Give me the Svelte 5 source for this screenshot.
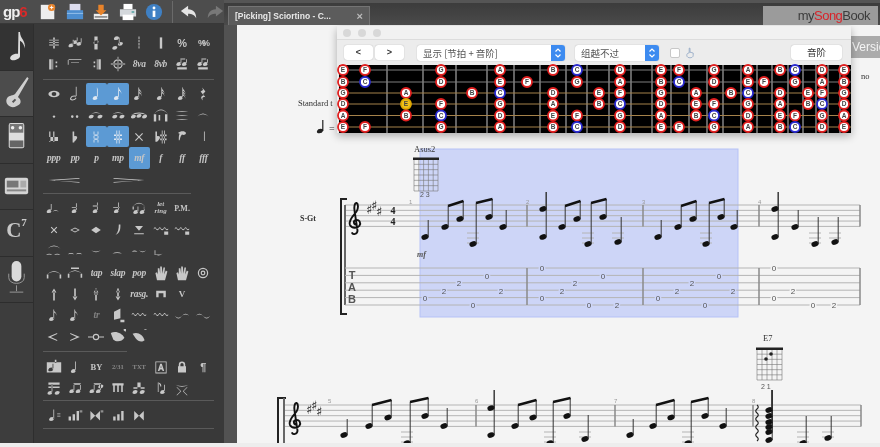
<script>
  const head = (x, y) => `M${x - 3} ${y}a3 2.1 -20 1 1 6 0a3 2.1 -20 1 1 -6 0z`;
  const bar = (x, y, w, h) => `M${x} ${y}h${w}v${h}h-${w}z`;
  const q = (x, y, top) => head(x, y) + bar(x + 2.2, top, 1, y - top);
  const flag = (x, y) => `M${x} ${y}c0 3 4 4 3 8c0-3-2-4-3-4z`;
  const arc = (x, y, w, h) => `M${x} ${y}q${w / 2} ${-h} ${w} 0q${-w / 2} ${-h + 2} ${-w} 0z`;
  const ring = (x, y, r, i) => `M${x - r} ${y}a${r} ${r} 0 1 1 ${2 * r} 0a${r} ${r} 0 1 1 ${-2 * r} 0zM${x - i} ${y}a${i} ${i} 0 1 0 ${2 * i} 0a${i} ${i} 0 1 0 ${-2 * i} 0z`;
  const wave = (x, y, n) => { let s = `M${x} ${y}`; for (let i = 0; i < n; i++) s += 'q1.5 -3 3 0q1.5 2 3 0'; s += 'v1.4'; for (let i = 0; i < n; i++) s += 'q-1.5 2 -3 0q-1.5 -3 -3 0'; return s + 'z'; };
  const T = (t, c = 'sans') => ({ t, c });
  const P = (d, sel = false) => ({ d, sel });
  const E = {};
  const beamed = (a, b) => q(a, 14, 5) + q(b, 14, 5) + bar(a + 2.2, 4, b - a + 1, 2);
  const figs = bar(4, 14, 12, 3) + q(6, 10, 4) + q(13, 10, 4) + bar(8, 3, 6, 1.5);

  const sec1 = [
    [P(bar(9, 3, 2, 14) + bar(4, 6, 12, 1) + bar(4, 9, 12, 1) + bar(4, 12, 12, 1)), P(q(5, 13, 6) + q(10, 9, 3) + q(15, 11, 4)), P(bar(8, 2, 4, 16) + head(10, 9)), P(head(8, 4) + head(13, 11) + head(6, 16) + bar(11, 3, 1, 9)), P(bar(9.4, 2, 1.2, 3) + bar(9.4, 6, 1.2, 3) + bar(9.4, 10, 1.2, 3) + bar(9.4, 14, 1.2, 3)), P(bar(8.5, 3, 3, 14)), T('%', 'bold'), T('%%', 'tight')],
    [P(bar(4, 4, 3, 13) + bar(8, 4, 1, 13) + bar(12, 7, 2, 2) + bar(12, 12, 2, 2)), P(bar(1, 4, 17, 1) + bar(1, 4, 1, 7) + bar(5, 8, 10, .6)), P(bar(13, 4, 3, 13) + bar(11, 4, 1, 13) + bar(7, 7, 2, 2) + bar(7, 12, 2, 2)), P(ring(10, 10, 6, 4.4) + bar(9.5, 1, 1, 18) + bar(1, 9.5, 18, 1)), T('8va', 'dyn'), T('8vb', 'dyn'), P(figs), P(figs)],
  ];
  const sec2 = [
    [P(`M3 10a7 4 0 1 1 14 0a7 4 0 1 1 -14 0zM7 10a3 2.4 0 1 0 6 0a3 2.4 0 1 0 -6 0z`), P(`M4 15a4 2.6 -20 1 1 8 0a4 2.6 -20 1 1 -8 0zM5.4 15a2.6 1.4 -20 1 0 5.2 0a2.6 1.4 -20 1 0 -5.2 0z` + bar(11, 1, 1, 14)), P(q(9, 15, 2) + bar(11, 2, 1, 1), true), P(q(8, 15, 2) + flag(11, 2), true), P(q(7, 15, 2) + flag(10, 2) + flag(10, 5)), P(q(8, 15, 2) + flag(11, 2) + flag(11, 5)), P(q(8, 15, 2) + flag(11, 2) + flag(11, 5) + flag(11, 8)), P(`M9 2l4 5-3 3 3 4c-3-1-5 1-3 4-4-3-2-6 1-6l-4-5 3-2z`)],
    [P(`M8.5 12a1.5 1.5 0 1 1 3 0a1.5 1.5 0 1 1-3 0z`), P(`M5 12a1.6 1.6 0 1 1 3.2 0a1.6 1.6 0 1 1-3.2 0zM11 12a1.6 1.6 0 1 1 3.2 0a1.6 1.6 0 1 1-3.2 0z`), P(arc(4, 9, 12, 5) + head(4, 12) + head(15, 12)), P(arc(3, 9, 14, 5) + head(6, 12) + head(15, 12)), P(arc(0, 10, 20, 6) + head(3, 12) + head(10, 11) + head(17, 12)), P(arc(1, 9, 18, 12) + bar(1, 9, 3, 9) + bar(15, 9, 3, 9) + bar(7, 10, 2, 7)), P(arc(2, 6, 16, 2) + arc(2, 11, 16, 2) + arc(2, 16, 16, 2)), P(arc(3, 12, 14, 8))],
    [P(bar(4, 3, 1.5, 13) + bar(9, 3, 1.5, 13) + bar(4, 10, 11, 5)), P(bar(7, 3, 2, 14) + `M9 9c5-1 5 3 0 7z`), P(bar(7, 3, 1, 14) + bar(12, 3, 1, 14) + bar(7, 7, 6, 1.4) + bar(7, 12, 6, 1.4), true), P(bar(8, 2, 1, 16) + bar(11, 2, 1, 16) + bar(5, 7, 10, 1.6) + bar(5, 12, 10, 1.6), true), P(`M6 5l4 4 4-4 1 1-4 4 4 4-1 1-4-4-4 4-1-1 4-4-4-4z`), P(bar(3, 3, 2, 13) + `M5 9c5-1 5 3 0 7z` + bar(11, 2, 1, 16) + bar(14, 2, 1, 16) + bar(9, 7, 8, 2) + bar(9, 12, 8, 2)), P(`M5 5c3-3 9-3 10 0c0 2-3 3-5 2c-2 2-2 4-3 7h-1c0-4 0-6 1-8z`), P(q(9, 15, 3) + head(9, 15))],
    [T('ppp', 'dyn'), T('pp', 'dyn'), T('p', 'dyn'), T('mp', 'dyn'), { t: 'mf', c: 'dyn', sel: true }, T('f', 'dyn'), T('ff', 'dyn'), T('fff', 'dyn')],
    [{ d: 'M1 10L21 7.5V8.500L4 10.500L21 12.500V13.500z', w: 2 }, E, { d: 'M1 7.500L21 10L1 13.500V12.500L18 10.500L1 8.500z', w: 2 }],
  ];
  const sec3 = [
    [P(head(4, 14) + bar(6, 5, 1, 9) + arc(8, 15, 8, 5)), P(q(9, 14, 4) + bar(6, 9, 6, 1)), P(q(9, 14, 3) + bar(6, 7, 6, 1)), P(q(8, 14, 3) + bar(4, 9, 8, 1)), P(q(6, 15, 8) + q(14, 15, 8) + arc(2, 8, 16, 9) + bar(2, 8, 1.5, 4) + bar(16, 8, 1.5, 4)), T('let\nring', 'serif-s'), T('P.M.', 'pm')],
    [P('M7 6l3 3 3-3 1 1-3 3 3 3-1 1-3-3-3 3-1-1 3-3-3-3z'), P('M4 10l6-3 6 3-6 3zM6 10l4 2 4-2-4-2z'), P('M4 10l6-4 6 4-6 4z'), P('M11 3h2c0 6 0 10-6 13c3-3 4-7 4-13z'), P('M5 5h10l-5 6zM4 14h12v1.4H4z'), P(wave(1, 8, 3) + bar(14, 12, 5, 4)), P(wave(1, 8, 3) + bar(14, 12, 5, 4))],
    [P(arc(2, 7, 16, 8) + arc(0, 15, 8, 3) + arc(10, 15, 8, 3)), P(arc(1, 14, 8, 3) + arc(11, 14, 8, 3)), P(arc(4, 9, 12, -3)), P(arc(3, 13, 12, 3)), P(arc(1, 11, 7, 3) + arc(10, 9, 9, -3)), P(arc(2, 13, 10, -3) + bar(2, 9, 1, 6))],
    [P(arc(1, 12, 18, 9) + bar(1, 12, 2, 5) + bar(17, 12, 2, 5)), P(arc(1, 11, 18, 9) + bar(1, 11, 2, 5) + bar(17, 11, 2, 5) + bar(5, 3, 10, 2)), T('tap', 'dyn2'), T('slap', 'dyn2'), T('pop', 'dyn2'), P('M5 19l-2-9 2-1 1 3 0-8 2 0 1 7 0-9 2 0 1 9 1-8 2 0-1 9 2-5 2 1-3 11z'), P('M5 19l-2-9 2-1 1 3 0-8 2 0 1 7 0-9 2 0 1 9 1-8 2 0-1 9 2-5 2 1-3 11z'), P(ring(10, 10, 6.5, 5) + ring(10, 10, 3, 1.5))],
    [P(bar(9, 7, 2, 11) + 'M7 8l3-5 3 5z'), P(bar(9, 3, 2, 11) + 'M7 13l3 5 3-5z'), P(bar(9, 3, 2, 15) + 'M7 8l3-5 3 5zM8 9h4v2H8z'), P(bar(9, 3, 2, 11) + 'M7 13l3 5 3-5zM8 6h4v2H8z'), T('rasg.', 'dyn'), P('M4 6h12v8h-3V9H7v5H4z'), T('V', 'vv'), E],
    [P(q(7, 15, 3) + flag(10, 3)), P(q(7, 15, 3) + flag(10, 3)), T('tr', 'dyn dim'), P('M5 6l8-4v12l-8 2zM13 16h5v3h-5z'), P(wave(1, 9, 3)), P(wave(1, 9, 3)), P(arc(1, 11, 9, -5) + arc(10, 11, 9, 5)), P(arc(1, 11, 9, 5) + arc(10, 11, 9, -5))],
    [P('M2 10l12-5v1.4L6 10l8 3.6V15z'), P('M16 10L4 5v1.4L12 10l-8 3.6V15z'), P(ring(10, 10, 4, 2.6) + bar(0, 9.5, 6, 1) + bar(14, 9.5, 6, 1)), P('M1 5c6-3 14 0 17 6c-3 5-10 6-14 2c-1-3-2-5-3-8zM19 3a2 2 0 1 1 .1 0z'), P('M2 6c6-3 13 1 15 8c-3 3-8 2-11-2zM18 1a2.5 2.5 0 1 1 .1 0z')],
  ];
  const sec4 = [
    [P(bar(1, 4, 18, 13) + bar(11, 1, 2, 4) + q(6, 13, 6)), P(q(8, 15, 3)), T('BY', 'by'), T('2/31', 'tiny'), T('TXT', 'tiny'), P(`M3 3h14v15H3zM4 4v13h12V4zM9 6h2l3 9h-2l-.7-2H8.7L8 15H6zM9.4 11h1.2L10 8z`), P('M6 9V7a4 4 0 0 1 8 0v2h1v8H5V9zM8 9h4V7a2 2 0 0 0-4 0z'), T('¶', 'bold')],
    [P(bar(3, 3, 14, 3) + bar(3, 8, 14, 2) + head(5, 16) + head(14, 16) + bar(7, 5, 1, 11)), P(beamed(6, 14)), P(beamed(5, 13) + head(16, 8)), P(bar(3, 4, 14, 3) + bar(4, 7, 2, 8) + bar(9, 7, 2, 8) + bar(14, 7, 2, 8)), P(head(5, 15) + head(14, 15) + bar(8, 3, 4, 8) + bar(3, 9, 14, 2)), P(bar(6, 3, 1, 12) + `M7 3c3 1 4 3 3 6` + head(12, 15) + bar(14, 6, 1, 9)), P(arc(2, 6, 16, -3) + 'M4 9l5 5-5 5h-1l5-5-5-5zM16 9l-5 5 5 5h1l-5-5 5-5z'), E],
  ];
  const sec5 = [
    [P(q(7, 15, 3) + bar(14, 8, 4, 1) + bar(14, 11, 4, 1)), P(bar(2, 12, 3, 5) + bar(7, 9, 3, 8) + bar(12, 5, 3, 12) + bar(16, 4, 1, 3) + bar(18, 4, 1, 3)), P('M3 5v12l6-6zM15 5v12l-6-6z' + bar(16, 4, 1, 3) + bar(18, 4, 1, 3)), P(bar(4, 12, 3, 5) + bar(9, 9, 3, 8) + bar(14, 5, 3, 12)), P('M4 5v12l6-6zM16 5v12l-6-6z')],
  ];

  const frets = [387, 423, 456, 487, 514, 540, 566, 587, 609, 631, 652, 671, 689, 707, 723, 741, 757, 772, 788, 803, 816, 828, 840];
  const strings = [[70, '#7e7e7e'], [82, '#7e7e7e'], [93, '#a5824a'], [104, '#a5824a'], [115.5, '#a5824a'], [127, '#a5824a']];
  const X = { a: 343, b: 365, c: 441, d: 500, e: 553, f: 577, g: 620, h: 661, i: 679, j: 714, k: 748, l: 780, m: 795, n: 822, o: 844, p: 406, q: 472, r: 527, s: 599, t: 696, u: 731, v: 764, w: 808 };
  const fbRows = [
    [70, 'aE bF cG dA eB fC gD hE iF jG kA lB mC nD oE'],
    [82, 'aB bC cD dE rF fG gA hB iC jD kE vF mG nA oB'],
    [93, 'aG pA qB dC eD sE gF hG tA uB kC lD wE nF oG'],
    [104, 'aD pE cF dG eA sB gC hD tE jF kG lA wB nC oD'],
    [115.5, 'aA pB cC dD eE fF gG hA tB jC kD lE mF nG oA'],
    [127, 'aE bF cG dA eB fC gD hE iF jG kA lB mC nD oE'],
  ];
  const fbNotes = fbRows.flatMap(([y, s]) => s.split(' ').map((k) => ({ y, x: X[k[0]], n: k[1] })));

  const sys1Notes = [[425, 237, 220], [445, 227, 206], [460, 219, 201], [473, 244, 203], [489, 217, 199], [503, 227, 210], [543, 237, 192], [543, 209, 192], [562, 227, 206], [577, 219, 201], [588, 244, 203], [603, 217, 199], [618, 242, 217], [658, 237, 220], [678, 227, 206], [693, 219, 201], [706, 244, 203], [721, 217, 199], [734, 227, 210], [775, 237, 192], [775, 209, 192], [795, 227, 210], [815, 244, 217], [835, 242, 217]];
  const sys1Beams = [[445, 206, 460, 201], [473, 203, 489, 199], [562, 206, 577, 201], [588, 203, 603, 199], [678, 206, 693, 201], [706, 203, 721, 199]];
  const sys1Ledger = [[473, 233], [473, 238], [473, 243], [588, 233], [588, 238], [588, 243], [618, 233], [618, 238], [706, 233], [706, 238], [706, 243], [815, 233], [815, 238], [815, 243], [835, 233], [835, 238]];
  const sys2Notes = [[344, 435, 419], [369, 426, 405], [388, 417.5, 400], [407, 443, 402], [425, 416, 398], [444, 426, 408], [491, 435, 390], [491, 408, 390], [515, 426, 405], [533, 417.5, 400], [550, 443, 402], [567, 416, 398], [585, 439, 415], [630, 435, 419], [653, 426, 405], [671, 417.5, 400], [688, 443, 402], [705, 416, 398], [723, 426, 408], [769, 440, 390], [769, 432, 390], [769, 427, 390], [769, 422, 390], [769, 416, 390], [769, 410, 390], [803, 443, 416], [828, 438, 416]];
  const sys2Beams = [[369, 405, 388, 400], [407, 402, 425, 398], [515, 405, 533, 400], [550, 402, 567, 398], [653, 405, 671, 400], [688, 402, 705, 398]];
  const sys2Ledger = [[407, 432], [407, 437], [407, 442], [550, 432], [550, 437], [550, 442], [585, 432], [585, 437], [688, 432], [688, 437], [688, 442], [803, 432], [803, 437], [803, 442], [828, 432], [828, 437]];
  const tabNums = [[425, 298, 0], [444, 291, 2], [459, 283, 2], [487, 276, 0], [473, 305, 0], [501, 291, 2], [542, 268, 0], [542, 298, 0], [562, 291, 2], [575, 283, 2], [603, 276, 0], [589, 305, 0], [617, 305, 2], [658, 298, 0], [677, 291, 2], [692, 283, 2], [719, 276, 0], [705, 305, 0], [733, 291, 2], [774, 268, 0], [774, 298, 0], [793, 291, 2], [813, 305, 0], [834, 305, 2]];
  const range = (a, n, s) => Array.from({ length: n }, (_, i) => a + i * s);
  const sections = [sec1, sec2, sec3, sec4, sec5];
  const clef = 'M9 24c-3 0-4-4-1-5 4-1 6 3 4 6-2 3-8 3-10-1-2-5 4-10 7-14 2-3 2-8 0-9-2 0-3 4-2 9l3 20c0 4-5 5-6 2';
</script>

{#snippet diagram(x, y, w, h)}
  <g class="grid">
    {#each range(x, 6, w / 5) as gx}<line x1={gx} x2={gx} y1={y} y2={y + h} />{/each}
    {#each range(y, 7, h / 6) as gy}<line x1={x} x2={x + w} y1={gy} y2={gy} />{/each}
  </g>
  <rect x={x - 1} y={y - 1.5} width={w + 2} height="2.5" fill="#222" />
{/snippet}

{#snippet system(x0, x1, top, notes, beams, ledger, bars)}
  {#each range(top, 5, 5.35) as y}<line class="staff" x1={x0} x2={x1} y1={y} y2={y} />{/each}
  {#each bars as bx}<line class="bar" x1={bx} x2={bx} y1={top} y2={top + 21.4} />{/each}
  {#each ledger as [x, y]}<line class="staff" x1={x - 6} x2={x + 6} y1={y} y2={y} />{/each}
  <path d={clef} transform="translate({x0 + 3} {top - 3}) scale(.95)" class="clef" />
  {#each [[22, 3], [27, -1], [32, 5]] as [dx, dy]}
    <text class="sharp" x={x0 + dx - 1} y={top + dy + 6}>♯</text>
  {/each}
  {#each notes as [x, y, t]}
    <ellipse class="head" cx={x} cy={y} rx="3.7" ry="2.6" transform="rotate(-20 {x} {y})" />
    <line class="stem" x1={x + 3.2} x2={x + 3.2} y1={y} y2={t} />
  {/each}
  {#each beams as [a, ay, b, by]}
    <line class="beam" x1={a + 3} x2={b + 3.5} y1={ay} y2={by} />
  {/each}
{/snippet}

<div class="app">
  <div class="left">
    <header class="tools">
      <div class="logo"><span>gp</span><b>6</b></div>
      <div class="ticons">
        <svg viewBox="0 0 20 20"><path d="M2 2h15v16H2z" fill="#eee" /><circle cx="14" cy="5" r="4" fill="#e8832a" /><path d="M12 5h4M14 3v4" stroke="#fff" /></svg>
        <svg viewBox="0 0 20 20"><path d="M4 1h12v9H4z" fill="#dde" /><path d="M1 8h18v10H1z" fill="#4d8ed0" /><path d="M1 11h18v1H1z" fill="#9cc4ec" /></svg>
        <svg viewBox="0 0 20 20"><path d="M2 12h16v6H2z" fill="#eee" /><path d="M3 15h14v1H3z" fill="#333" /><path d="M7 2h6v6h3l-6 6-6-6h3z" fill="#e8832a" /></svg>
        <svg viewBox="0 0 20 20"><path d="M5 1h10v6H5z" fill="#fff" /><path d="M1 7h18v8H1z" fill="#d4d8dc" /><path d="M4 13h12v6H4z" fill="#fff" /><path d="M14 9h3v2h-3z" fill="#6aa" /></svg>
        <svg viewBox="0 0 20 20"><circle cx="10" cy="10" r="9" fill="#3f80c4" /><circle cx="10" cy="5.500" r="1.600" fill="#fff" /><path d="M8.500 8.500h3v7h-3z" fill="#fff" /></svg>
        <i class="sep"></i>
        <svg viewBox="0 0 20 20"><path d="M9 3L1 9l8 6v-3c4 0 7 1 9 5c0-6-3-10-9-10z" fill="#e4e4e4" /></svg>
        <svg viewBox="0 0 20 20"><path d="M11 3l8 6-8 6v-3c-4 0-7 1-9 5c0-6 3-10 9-10z" fill="#787878" /></svg>
      </div>
    </header>
    <div class="lbody">
      <nav class="rail">
        <div class="ri dark"><svg viewBox="0 0 34 46"><path d="M19 8h1.600c0 7 6 8 5 17c-1-5-3-7-5-8v16c0 3-8 6-10 3c-1-3 3-6 8-5.500z" fill="#dcdcdc" /></svg></div>
        <div class="ri light"><svg viewBox="0 0 34 46"><path d="M28 6l1.500 1.500-11 19c4 3 3 7 1 8s-5 4-9 2-5-6-3-9 6-2 8-4 4-4z" fill="#cfcfcf" /><path d="M13 32l3-3" stroke="#555" stroke-width="2" /></svg></div>
        <div class="ri"><svg viewBox="0 0 34 46"><rect x="9" y="6" width="16" height="26" rx="2" fill="#dedede" /><rect x="10" y="7" width="14" height="9" fill="#777" /><circle cx="13" cy="11" r="1.800" fill="#eee" /><circle cx="21" cy="11" r="1.800" fill="#eee" /><rect x="10" y="24" width="14" height="7" fill="#666" /></svg></div>
        <div class="ri"><svg viewBox="0 0 34 46"><rect x="5" y="14" width="24" height="17" rx="2" fill="#d4d4d4" /><rect x="7" y="17" width="12" height="7" fill="#777" /><rect x="21" y="17" width="6" height="7" fill="#aaa" /><rect x="7" y="26" width="20" height="2" fill="#888" /></svg></div>
        <div class="ri c7"><span>C</span><sup>7</sup></div>
        <div class="ri"><svg viewBox="0 0 34 46"><rect x="12" y="4" width="10" height="21" rx="5" fill="#dadada" /><path d="M9 17v4c0 8 16 8 16 0v-4" fill="none" stroke="#999" /><path d="M17 29v6M10 36h14" stroke="#999" /></svg></div>
      </nav>
      <div class="palette">
        {#each sections as sec, si}
          <div class="sec s{si}">
            {#each sec as row}
              {#each row as it}
                {#if it.d}
                  <span class="cell" class:sel={it.sel} class:wide={it.w}><svg viewBox={it.w ? '0 0 22 20' : '0 0 20 20'} preserveAspectRatio="none"><path d={it.d} fill-rule="evenodd" /></svg></span>
                {:else if it.t}
                  <span class="cell {it.c}" class:sel={it.sel}>{it.t}</span>
                {:else}
                  <span class="cell"></span>
                {/if}
              {/each}
              {#each range(0, 8 - row.reduce((n, it) => n + (it.w ? 2 : 1), 0), 1) as _}<span class="cell"></span>{/each}
            {/each}
          </div>
        {/each}
      </div>
    </div>
  </div>

  <div class="right">
    <div class="tabs">
      <div class="tab"><span>[Picking] Sciortino - C...</span><em>×</em></div>
      <div class="msb">my<b>Song</b>Book</div>
    </div>
    <div class="work">
      <main class="sheet">
        <svg class="score" viewBox="237 25 643 418" width="643" height="418">
          <rect class="selection" x="420" y="149" width="318" height="168" />
          <text class="serif" x="298" y="106" font-size="8.500">Standard t</text>
          <text class="serif" x="861" y="79" font-size="8.500">no</text>
          <path d={head(320, 131) + bar(322.2, 120, 1.2, 11)} fill="#222" />
          <text class="serif" x="329" y="132" font-size="10">=</text>

          <text class="serif" x="414" y="152" font-size="8.500">Asus2</text>
          {@render diagram(414, 159, 24, 32)}
          <text class="sans tiny" x="420" y="197">2 3</text>
          <text class="gstag" x="300" y="221">S-Gt</text>

          {@render system(345, 860, 205, sys1Notes, sys1Beams, sys1Ledger, [527, 643, 759, 860])}
          <text class="time" x="390.500" y="214">4</text>
          <text class="time" x="390.500" y="225">4</text>
          <text class="mf" x="417" y="257">mf</text>
          {#each [[409, 1], [526, 2], [642, 3], [758, 4]] as [x, n]}<text class="barno" {x} y="204">{n}</text>{/each}

          <path class="bracket" d="M347 199h-6v115h6" />
          <line class="staff dark" x1="345" x2="345" y1="205" y2="305" />
          {#each range(268, 6, 7.4) as y}<line class="staff" x1="345" x2="860" y1={y} y2={y} />{/each}
          {#each [527, 643, 759, 860] as bx}<line class="bar" x1={bx} x2={bx} y1="268" y2="305" />{/each}
          <text class="tabclef" x="352" y="279">T</text>
          <text class="tabclef" x="352" y="291">A</text>
          <text class="tabclef" x="352" y="303">B</text>
          {#each tabNums as [x, y, n]}
            <text class="fretnum" class:over={x < 738} {x} y={y + 3}>{n}</text>
          {/each}

          <text class="serif" x="763" y="341" font-size="8.500">E7</text>
          {@render diagram(757, 349, 25, 31)}
          <circle cx="766" cy="359" r="1.800" fill="#222" /><circle cx="771" cy="354" r="1.800" fill="#222" />
          <text class="sans tiny" x="761" y="389">2 1</text>

          {@render system(285, 861, 405, sys2Notes, sys2Beams, sys2Ledger, [476, 615, 753, 861])}
          {#each [[328, 5], [475, 6], [614, 7], [752, 8]] as [x, n]}<text class="barno" {x} y="403">{n}</text>{/each}
          <path class="bracket" d="M286 398h-8v50" />
          <line class="staff dark" x1="284" x2="284" y1="398" y2="447" />
          <path d="M757 405q2.500 2 0 4q-2.500 2 0 4q2.500 2 0 4q-2.500 2 0 4q2.500 2 0 4q-2.500 2 0 4q2.500 2 0 4q-2.500 2 0 4q2.500 2 0 4" fill="none" stroke="#222" stroke-width="1.200" />
        </svg>
        <div class="version">Version</div>

        <section class="fb">
          <div class="titlebar"><i></i><i></i><i></i></div>
          <div class="fbtools">
            <div class="pair"><button>&lt;</button><button>&gt;</button></div>
            <div class="select s1"><span>显示 [节拍 + 音阶]</span><b><svg viewBox="0 0 8 12"><path d="M1.500 4.500L4 2l2.500 2.500M1.500 7.500L4 10l2.500-2.500" fill="none" stroke="#fff" stroke-width="1.200" /></svg></b></div>
            <div class="select s2"><span>组越不过</span><b><svg viewBox="0 0 8 12"><path d="M1.500 4.500L4 2l2.500 2.500M1.500 7.500L4 10l2.500-2.500" fill="none" stroke="#fff" stroke-width="1.200" /></svg></b></div>
            <span class="check"></span>
            <svg class="hand" viewBox="0 0 10 14"><path d="M4 1v6c-2 0-3 1-3 3s2 3 4 3 4-1 4-3V7L5 6V1z" fill="none" stroke="#8fa6c4" /></svg>
            <button class="scale">音阶</button>
          </div>
          <svg class="board" viewBox="339 65 512 68" width="512" height="68">
            <rect x="339" y="65" width="512" height="68" fill="#000" />
            {#each frets as x}<line x1={x} x2={x} y1="65" y2="133" stroke="#6e6e6e" stroke-width="1.800" />{/each}
            {#each strings as [y, c]}<line x1="339" x2="851" y1={y} y2={y} stroke={c} stroke-width="1" />{/each}
            {#each fbNotes as n}
              <circle class="dot" class:blue={n.n === 'C'} class:gold={n.n === 'E' && n.x === 406} cx={n.x} cy={n.y} r="5" />
              <text class="dotname" x={n.x} y={n.y + 2.300}>{n.n}</text>
            {/each}
          </svg>
        </section>
      </main>
    </div>
  </div>
</div>

<style>
  :global(body) { margin: 0; background: #ededed; }
  .app { display: flex; width: 880px; height: 443px; overflow: hidden; background: #4a4a4a; font-family: "Liberation Sans", sans-serif; filter: blur(0.5px); }
  .left { width: 224px; display: flex; flex-direction: column; flex: none; }
  .tools { height: 24px; display: flex; align-items: center; background: #4d4d4d; flex: none; box-sizing: border-box; border-bottom: 1px solid #383838; }
  .logo { width: 38px; padding-left: 3px; font: 700 15px/1 "Liberation Sans", sans-serif; color: #eee; box-sizing: border-box; letter-spacing: -1px; }
  .logo b { color: #d62a2a; }
  .ticons { display: flex; align-items: center; gap: 8.500px; margin-left: 1px; }
  .ticons svg { width: 18px; height: 18px; }
  .sep { width: 1px; height: 22px; background: #6a6a6a; margin: 0 -1px 0 0; }
  .ticons svg:last-child { margin-left: -1px; }
  .lbody { flex: 1; display: flex; min-height: 0; }
  .rail { width: 34px; background: #3d3d3d; flex: none; border-right: 1px solid #2e2e2e; box-sizing: border-box; }
  .ri { height: 46.500px; display: flex; align-items: center; justify-content: center; border-bottom: 1px solid #2d2d2d; box-sizing: border-box; }
  .ri svg { width: 33px; height: 45px; }
  .ri.dark { background: #333; }
  .ri.light { background: #4c4c4c; }
  .c7 { font: 700 21px/1 "Liberation Serif", serif; color: #c8c8c8; align-items: flex-start; padding-top: 10px; }
  .c7 sup { font-size: 11px; margin-top: -3px; }
  .palette { flex: 1; background: #393939; padding: 8px 0 0 9px; box-sizing: border-box; }
  .sec { display: grid; grid-template-columns: repeat(8, 21.400px); grid-auto-rows: 21.400px; width: 171px; color: #c6c6c6; padding: 3.500px 0; border-bottom: 1.500px solid #5a5a5a; }
  .sec.s4 { padding-bottom: 2px; }
  .sec.s3 { padding-top: 4px; padding-bottom: 1.500px; }
  .sec.s0 { padding-top: 0; padding-bottom: 4.500px; }
  .sec.s1 { padding-top: 3px; padding-bottom: 3px; }
  .cell { display: flex; align-items: center; justify-content: center; text-align: center; white-space: pre-line; }
  .cell svg { width: 16px; height: 16px; fill: #c8c8c8; }
  .cell.sel svg { fill: #dfe8f2; }
  .cell.wide { grid-column: span 2; }
  .cell.wide svg { width: 34px; }
  .sel { background: #5c9ad4; border-radius: 2px; }
  .sans { font: 700 10px "Liberation Sans", sans-serif; }
  .bold { font: 700 11px "Liberation Sans", sans-serif; }
  .tight { font: 700 9px "Liberation Sans", sans-serif; letter-spacing: -4px; padding-right: 3px; }
  .dyn { font: italic 700 9.500px "Liberation Serif", serif; letter-spacing: -.3px; }
  .dyn2 { font: italic 700 9.500px "Liberation Serif", serif; letter-spacing: -.3px; }
  .dim { opacity: .5; }
  .serif-s { font: italic 700 7px/7px "Liberation Serif", serif; }
  .pm { font: 700 8px "Liberation Serif", serif; }
  .vv { font: 700 9px "Liberation Serif", serif; }
  .by { font: 700 8.500px "Liberation Serif", serif; }
  .tiny { font: 700 6.500px "Liberation Serif", serif; color: #8a8a8a; }
  .right { flex: 1; min-width: 0; display: flex; flex-direction: column; }
  .tabs { height: 25px; flex: none; display: flex; justify-content: space-between; align-items: flex-end; padding: 0 2px 0 4px; background: linear-gradient(#555 0 3px, #3c3c3c 3px, #4a4a4a); box-sizing: border-box; }
  .tab { width: 142px; height: 19px; background: #5c5c5c; border: 1px solid #747474; border-bottom: 0; box-sizing: border-box; display: flex; justify-content: space-between; align-items: center; padding: 0 6px; color: #e8e8e8; font: 700 8.500px "Liberation Sans", sans-serif; }
  .tab em { font-style: normal; color: #bbb; font-size: 11px; }
  .msb { width: 115px; height: 19px; background: #9b9b9b; font: 400 13px/19px "Liberation Sans", sans-serif; color: #3c3c3c; letter-spacing: -.5px; text-align: right; padding-right: 8px; box-sizing: border-box; }
  .msb b { color: #d8232a; font-weight: 400; }
  .work { flex: 1; min-height: 0; padding-left: 13px; display: flex; background: #525252; }
  .sheet { flex: 1; position: relative; background: #f4f4f4; overflow: hidden; }
  .score { display: block; }
  .selection { fill: #cdd5f7; stroke: #b5c1f6; stroke-width: 1; }
  .serif { font-family: "Liberation Serif", serif; fill: #333; }
  .gstag { font: 700 8px "Liberation Serif", serif; fill: #333; }
  .tiny { fill: #555; }
  text.tiny { font: 400 7px "Liberation Sans", sans-serif; }
  .grid line { stroke: #777; stroke-width: .6; }
  .staff { stroke: #b4b4b4; stroke-width: 1; }
  .staff.dark { stroke: #666; stroke-width: 2; }
  .bar { stroke: #8a8a8a; stroke-width: 1.500; }
  .clef { fill: none; stroke: #111; stroke-width: 2; }
  .sharp { font: 700 13px "DejaVu Sans", sans-serif; fill: #222; }
  .time { font: 900 10px "Liberation Serif", serif; fill: #222; }
  .head { fill: #111; }
  .stem { stroke: #333; stroke-width: 1; }
  .beam { stroke: #111; stroke-width: 2.400; }
  .mf { font: italic 700 8px "Liberation Serif", serif; fill: #555; }
  .barno { font: 400 6px "Liberation Sans", sans-serif; fill: #999; }
  .bracket { fill: none; stroke: #222; stroke-width: 2; }
  .tabclef { font: 700 11px "Liberation Sans", sans-serif; fill: #555; text-anchor: middle; }
  .fretnum { font: 400 8px "Liberation Sans", sans-serif; fill: #555; text-anchor: middle; stroke: #f4f4f4; stroke-width: 3px; paint-order: stroke; }
  .fretnum.over { stroke: #cdd5f7; }
  .version { position: absolute; right: 0; top: 11px; width: 30px; height: 22px; background: #ababab; color: #f4f4f4; font: 400 12px/22px "Liberation Sans", sans-serif; overflow: hidden; white-space: nowrap; padding-left: 2px; box-sizing: border-box; }
  .fb { position: absolute; left: 100px; top: 1px; width: 514px; height: 107px; background: #ededed; box-shadow: 0 3px 9px rgba(0,0,0,.3); border-radius: 3px 3px 0 0; display: flex; flex-direction: column; }
  .titlebar { height: 14px; flex: none; display: flex; align-items: center; gap: 7px; padding-left: 6px; background: #f1f1f1; border-bottom: 1px solid #dcdcdc; box-sizing: border-box; }
  .titlebar i { width: 8px; height: 8px; border-radius: 50%; background: #d8d8d8; }
  .fbtools { height: 25px; flex: none; display: flex; align-items: center; padding-left: 7px; background: #ececec; }
  .pair { display: flex; gap: 2px; margin-right: 13px; }
  button { width: 29px; height: 15px; background: #fff; border: 0; border-radius: 3px; box-shadow: 0 0 1px #999; font: 700 9px/15px "Liberation Sans", sans-serif; color: #333; padding: 0; }
  .select { height: 16px; background: #fff; border-radius: 3px; display: flex; justify-content: space-between; box-shadow: 0 0 1px #999; font: 400 9.500px/16px "Noto Sans CJK SC", sans-serif; color: #555; padding-left: 6px; box-sizing: border-box; overflow: hidden; }
  .select b { width: 14px; background: #3d8bf0; display: flex; align-items: center; justify-content: center; }
  .select b svg { width: 8px; height: 12px; }
  .s1 { width: 148px; margin-right: 10px; }
  .s2 { width: 84px; margin-right: 11px; }
  .check { width: 10px; height: 10px; background: #fff; border: 1px solid #c8c8c8; border-radius: 2px; box-sizing: border-box; margin-right: 6px; }
  .hand { width: 8px; height: 12px; margin-right: 97px; }
  .scale { width: 51px; font: 400 9.500px/15px "Noto Sans CJK SC", sans-serif; }
  .board { display: block; margin-left: 2px; overflow: visible; }
  .dot { fill: #fff; stroke: #e01f1f; stroke-width: 1.800; }
  .dot.blue { stroke: #2a2ad0; }
  .dot.gold { fill: #efc11a; stroke: #e0a800; }
  .dotname { font: 700 6.500px "Liberation Sans", sans-serif; fill: #444; text-anchor: middle; }
</style>
